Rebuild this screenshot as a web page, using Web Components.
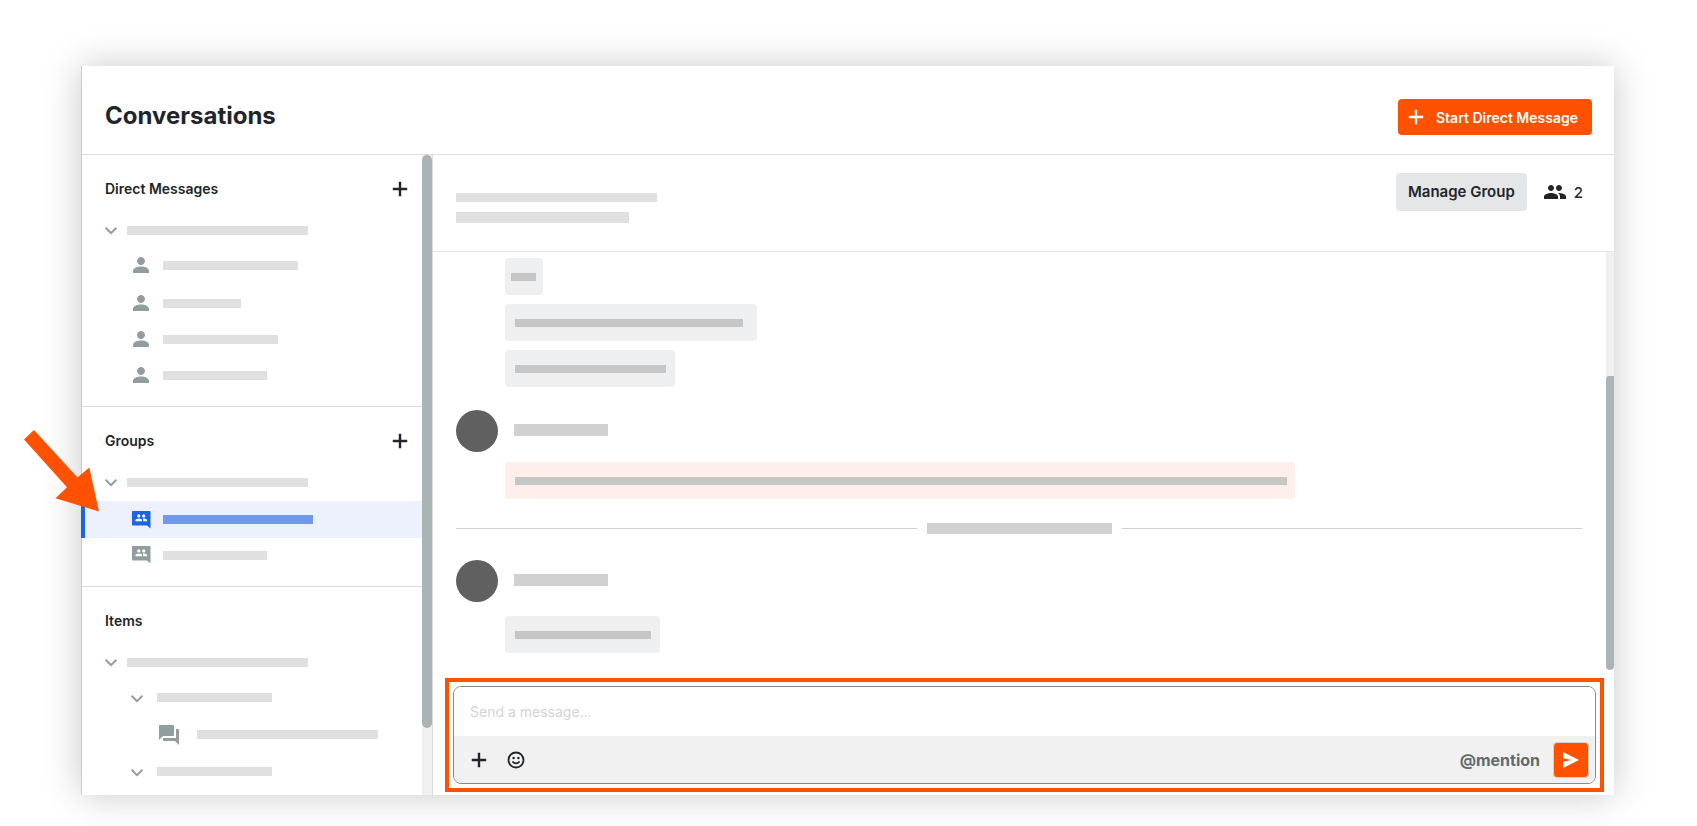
<!DOCTYPE html>
<html lang="en">
<head>
<meta charset="utf-8">
<title>Conversations</title>
<style>
  * { box-sizing: border-box; }
  body {
    margin: 0;
    padding: 66px 83px 31px 81px;
    background: #fff;
    color: #212529;
    font-family: Inter, "Liberation Sans", sans-serif;
    font-size: 14px;
  }
  .spaced { margin-top: 2px; }
</style>
</head>
<body>

<conversations-app>
  <app-header slot="header" heading="Conversations"></app-header>

  <side-section slot="sidebar" heading="Direct Messages" addable>
    <nav-row kind="folder" icon="chevron" bar="181"></nav-row>
    <nav-row kind="item" icon="person" bar="135"></nav-row>
    <nav-row kind="item" icon="person" bar="78" class="spaced"></nav-row>
    <nav-row kind="item" icon="person" bar="115"></nav-row>
    <nav-row kind="item" icon="person" bar="104"></nav-row>
  </side-section>
  <side-section slot="sidebar" heading="Groups" addable>
    <nav-row kind="folder" icon="chevron" bar="181"></nav-row>
    <nav-row kind="item" icon="groupchat" bar="150" class="spaced" selected></nav-row>
    <nav-row kind="item" icon="groupchat" bar="104" compact></nav-row>
  </side-section>
  <side-section slot="sidebar" heading="Items">
    <nav-row kind="folder" icon="chevron" bar="181"></nav-row>
    <nav-row kind="subfolder" icon="chevron" bar="115"></nav-row>
    <nav-row kind="subitem" icon="forum" bar="181"></nav-row>
    <nav-row kind="subfolder" icon="chevron" bar="115"></nav-row>
  </side-section>

  <group-header members="2"></group-header>
  <message-list>
    <message-bubble width="38" bar="25"></message-bubble>
    <message-bubble width="252" bar="228"></message-bubble>
    <message-bubble width="170" bar="151"></message-bubble>
    <message-author bar="94"></message-author>
    <message-bubble width="790" bar="772" mention></message-bubble>
    <date-divider></date-divider>
    <message-author bar="94"></message-author>
    <message-bubble width="155" bar="136" class="last"></message-bubble>
  </message-list>
  <message-composer></message-composer>
</conversations-app>

<script>
(function() {

  const ICONS = {
    add: '<path d="M19.2 13.2h-6v6h-2.4v-6h-6v-2.4h6v-6h2.4v6h6z"/>',
    chevron: '<path d="M16.700 9 12 13.700 7.300 9 5.900 10.400l6.100 6.100 6.100-6.100z"/>',
    person: '<path d="M12 12c2.2 0 4-1.8 4-4s-1.8-4-4-4-4 1.800-4 4 1.800 4 4 4zm0 1.500c-3.500 0-8 1.300-8 4.500v2h16v-2c0-3.200-4.500-4.500-8-4.500z"/>',
    groupchat: '<path d="M4 3h16.500c.6 0 1 .4 1 1v16.500l-3.500-3H4c-.6 0-1-.4-1-1V4c0-.6.4-1 1-1z"/>' +
      '<g fill="#fff"><circle cx="9.800" cy="7.900" r="1.600"/><circle cx="14.700" cy="7.900" r="1.600"/>' +
      '<path d="M6.400 13.300v-.9c0-1.200 2-1.900 3.500-1.900s3.200.7 3.200 1.900v.9zM14.300 13.300v-1c0-.7-.4-1.300-.9-1.700 1.500-.3 4.700.2 4.700 1.700v1z"/></g>',
    forum: '<path d="M21 6h-2v9H6v2c0 .55.45 1 1 1h11l4 4V7c0-.55-.45-1-1-1zm-4 6V3c0-.55-.45-1-1-1H3c-.55 0-1 .45-1 1v14l4-4h10c.55 0 1-.45 1-1z"/>',
    people: '<path d="M16 11c1.660 0 2.990-1.340 2.990-3S17.660 5 16 5s-3 1.340-3 3 1.340 3 3 3zm-8 0c1.660 0 2.990-1.340 2.990-3S9.660 5 8 5 5 6.340 5 8s1.340 3 3 3zm0 2c-2.330 0-7 1.170-7 3.500V19h14v-2.500C15 14.170 10.330 13 8 13zm8 0c-.29 0-.62.020-.97.050C16.190 13.890 17 15.020 17 16.500V19h6v-2.500c0-2.330-4.670-3.500-7-3.500z"/>',
    emoji: '<g fill="none" stroke="currentColor" stroke-width="1.800" stroke-linecap="round"><circle cx="12" cy="12" r="7.500"/><path d="M9 14c1.300 1.900 4.700 1.900 6 0"/></g>' +
      '<circle cx="9.600" cy="10" r="1.200"/><circle cx="14.400" cy="10" r="1.200"/>',
    send: '<path d="M4 4l16 8-16 8v-6.200l8.500-1.800L4 10.200z"/>'
  };

  class AppIcon extends HTMLElement {
    constructor() {
      super();
      this.attachShadow({ mode: 'open' });
    }

    connectedCallback() {
      this.shadowRoot.innerHTML = `
        <style>
          :host { display: block; width: 24px; height: 24px; flex: none; }
          svg { display: block; fill: currentColor; }
        </style>
        <svg width="24" height="24" viewBox="0 0 24 24" aria-hidden="true">${ICONS[this.getAttribute('name')]}</svg>
      `;
    }
  }

  // grey block that stands in for a line of text
  class SkeletonBar extends HTMLElement {
    constructor() {
      super();
      this.attachShadow({ mode: 'open' });
    }

    connectedCallback() {
      const width = this.getAttribute('width');
      const height = this.getAttribute('height') || 9;
      this.shadowRoot.innerHTML = `
        <style>
          :host {
            display: block;
            width: ${width}px;
            max-width: 100%;
            height: ${height}px;
            background: var(--bar-color, #e0e0e0);
          }
        </style>
      `;
    }
  }

  class AppHeader extends HTMLElement {
    constructor() {
      super();
      this.attachShadow({ mode: 'open' });
    }

    connectedCallback() {
      this.shadowRoot.innerHTML = `
        <style>
          :host {
            display: flex;
            align-items: center;
            justify-content: space-between;
            box-sizing: border-box;
            height: 89px;
            padding: 14px 22px 0 23px;
            border-bottom: 1px solid #d9dedf;
          }
          h1 { margin: 0 0 2px; font-size: 24px; line-height: 32px; font-weight: 700; }
          button {
            display: flex;
            align-items: center;
            gap: 8px;
            height: 36px;
            padding: 0 14px 0 6px;
            border: 0;
            border-radius: 4px;
            background: #ff5100;
            color: #fff;
            font: 600 14px Inter, "Liberation Sans", sans-serif;
          }
        </style>
        <h1>${this.getAttribute('heading')}</h1>
        <button type="button"><app-icon name="add"></app-icon>Start Direct Message</button>
      `;
    }
  }

  class SideSection extends HTMLElement {
    constructor() {
      super();
      this.attachShadow({ mode: 'open' });
    }

    connectedCallback() {
      const heading = this.getAttribute('heading');
      const add = this.hasAttribute('addable')
        ? `<button type="button" aria-label="Add to ${heading}"><app-icon name="add"></app-icon></button>`
        : '';
      this.shadowRoot.innerHTML = `
        <style>
          :host { display: block; padding: 14px 0; border-bottom: 1px solid #dcdcdc; }
          :host(:first-of-type) { padding-bottom: 13px; }
          :host(:last-of-type) { border-bottom: 0; padding-bottom: 5px; }
          header {
            display: flex;
            align-items: center;
            justify-content: space-between;
            height: 40px;
            margin-bottom: 4px;
            padding: 0 10px 0 23px;
          }
          h2 { margin: 0; font-size: 14px; line-height: 20px; font-weight: 600; }
          button { padding: 0; border: 0; background: none; color: inherit; }
        </style>
        <header><h2>${heading}</h2>${add}</header>
        <nav aria-label="${heading}"><slot></slot></nav>
      `;
    }
  }

  class NavRow extends HTMLElement {
    constructor() {
      super();
      this.attachShadow({ mode: 'open' });
    }

    connectedCallback() {
      const arrow = this.hasAttribute('selected')
        ? `<svg class="arrow" width="76" height="84" viewBox="0 0 76 84" aria-hidden="true">
             <path d="M1 10.500 11 1l43.500 47.500 11.800-10L76 82.500 32.500 69.300 44 58.200z" fill="#ff5100"/>
           </svg>`
        : '';
      this.shadowRoot.innerHTML = `
        <style>
          :host {
            position: relative;
            display: flex;
            align-items: center;
            gap: 10px;
            box-sizing: border-box;
            height: 37px;
            padding-left: 47px;
            color: #929da1;
          }
          :host([icon="person"]) { height: 36px; }
          :host([kind="folder"]) { height: 34px; padding-left: 17px; gap: 4px; }
          :host([kind="subfolder"]) { padding-left: 43px; gap: 8px; }
          :host([kind="subitem"]) { padding-left: 75px; gap: 16px; }
          :host([compact]) { height: 34px; }
          :host([selected]) {
            margin-left: -1px;
            padding-left: 44px;
            border-left: 4px solid #1b64e4;
            background: #edf1fd;
            color: #1b64e4;
            --bar-color: #6f9aea;
          }
          /* callout that points at the selected group, over the window edge */
          .arrow { position: absolute; right: 100%; top: -72px; margin-right: -14px; z-index: 1; }
        </style>
        <app-icon name="${this.getAttribute('icon')}"></app-icon>
        <skeleton-bar width="${this.getAttribute('bar')}"></skeleton-bar>
        ${arrow}
      `;
    }
  }

  class GroupHeader extends HTMLElement {
    constructor() {
      super();
      this.attachShadow({ mode: 'open' });
    }

    connectedCallback() {
      this.shadowRoot.innerHTML = `
        <style>
          :host {
            display: flex;
            align-items: flex-start;
            justify-content: space-between;
            box-sizing: border-box;
            height: 97px;
            padding: 18px 31px 0 23px;
            border-bottom: 1px solid #e4e6e6;
          }
          .title { display: grid; gap: 10px; padding-top: 20px; }
          .actions { display: flex; align-items: center; gap: 16px; }
          button {
            height: 38px;
            padding: 0 12px 2px;
            border: 0;
            border-radius: 4px;
            background: #e4e6e8;
            color: inherit;
            font: 600 15px Inter, "Liberation Sans", sans-serif;
          }
          .members { display: flex; align-items: center; gap: 7px; font-size: 15px; font-weight: 500; }
        </style>
        <div class="title">
          <skeleton-bar width="201"></skeleton-bar>
          <skeleton-bar width="173" height="11"></skeleton-bar>
        </div>
        <div class="actions">
          <button type="button">Manage Group</button>
          <div class="members"><app-icon name="people"></app-icon><span>${this.getAttribute('members')}</span></div>
        </div>
      `;
    }
  }

  const template_list = document.createElement('template');
  template_list.innerHTML = `
    <style>
      :host { display: flex; flex: 1; margin-bottom: 8px; }
      .messages { flex: 1; min-width: 0; padding: 6px 24px 17px 23px; }
      .track {
        display: flex;
        align-items: flex-end;
        width: 8px;
        background: linear-gradient(#f0f0f0 50%, #fff 50%);
      }
      .thumb { width: 8px; height: calc(100% - 124px); border-radius: 3px 0 4px 4px; background: #aab4b6; }
    </style>
    <div class="messages"><slot></slot></div>
    <div class="track"><div class="thumb"></div></div>
  `;

  class MessageList extends HTMLElement {
    constructor() {
      super();
      this.attachShadow({ mode: 'open' });
      this.shadowRoot.appendChild(template_list.content.cloneNode(true));
    }
  }

  class MessageBubble extends HTMLElement {
    constructor() {
      super();
      this.attachShadow({ mode: 'open' });
    }

    connectedCallback() {
      this.shadowRoot.innerHTML = `
        <style>
          :host {
            display: flex;
            align-items: center;
            box-sizing: border-box;
            width: ${this.getAttribute('width')}px;
            max-width: calc(100% - 49px);
            height: 37px;
            margin: 0 0 9px 49px;
            padding: 0 6px 0 10px;
            border-radius: 4px;
            background: #eeeff1;
            --bar-color: #c6c6c6;
          }
          :host([width="38"]) { padding-left: 6px; }
          :host([mention]) { background: #feefea; }
          :host([mention]), :host(.last) { margin-bottom: 0; }
          :host(.last) { margin-top: 14px; }
        </style>
        <skeleton-bar width="${this.getAttribute('bar')}" height="8"></skeleton-bar>
      `;
    }
  }

  class MessageAuthor extends HTMLElement {
    constructor() {
      super();
      this.attachShadow({ mode: 'open' });
    }

    connectedCallback() {
      this.shadowRoot.innerHTML = `
        <style>
          :host {
            display: flex;
            align-items: center;
            gap: 16px;
            margin: 23px 0 10px;
            --bar-color: #d1d1d1;
          }
          .avatar { width: 42px; height: 42px; border-radius: 50%; background: #606060; }
          skeleton-bar { margin-bottom: 2px; }
        </style>
        <div class="avatar"></div>
        <skeleton-bar width="${this.getAttribute('bar')}" height="12"></skeleton-bar>
      `;
    }
  }

  const template_divider = document.createElement('template');
  template_divider.innerHTML = `
    <style>
      :host {
        display: flex;
        align-items: center;
        gap: 10px;
        margin: 24px 0 26px;
        --bar-color: #d1d1d1;
      }
      .line { flex: 1; height: 1px; background: #d1d1d1; }
    </style>
    <div class="line"></div>
    <skeleton-bar width="185" height="11"></skeleton-bar>
    <div class="line"></div>
  `;

  class DateDivider extends HTMLElement {
    constructor() {
      super();
      this.attachShadow({ mode: 'open' });
      this.shadowRoot.appendChild(template_divider.content.cloneNode(true));
    }
  }

  const template_composer = document.createElement('template');
  template_composer.innerHTML = `
    <style>
      :host {
        display: block;
        margin: 0 10px 3px 12px;
        padding: 4px;
        border: 4px solid #ff5100;
      }
      form {
        margin: 0;
        overflow: hidden;
        border: 1px solid #888;
        border-radius: 8px;
      }
      input {
        display: block;
        box-sizing: border-box;
        width: 100%;
        height: 49px;
        padding: 0 16px;
        border: 0;
        outline: 0;
        font: 14px Inter, "Liberation Sans", sans-serif;
      }
      input::placeholder { color: #d2d4d5; }
      .toolbar {
        display: flex;
        align-items: center;
        gap: 13px;
        height: 47px;
        padding: 0 6px 0 13px;
        background: #f1f1f1;
      }
      button {
        padding: 0;
        border: 0;
        background: none;
        color: #212529;
        font: 700 16px Inter, "Liberation Sans", sans-serif;
      }
      .mention { margin-left: auto; color: #5f6b6d; }
      .send {
        display: grid;
        place-items: center;
        width: 36px;
        height: 36px;
        border: 1px solid #d5d2d0;
        border-radius: 4px;
        background: #ff5100;
        color: #fff;
      }
    </style>
    <form>
      <input type="text" aria-label="Message" placeholder="Send a message...">
      <div class="toolbar">
        <button type="button" aria-label="Attach"><app-icon name="add"></app-icon></button>
        <button type="button" aria-label="Emoji"><app-icon name="emoji"></app-icon></button>
        <button type="button" class="mention">@mention</button>
        <button type="button" class="send" aria-label="Send"><app-icon name="send"></app-icon></button>
      </div>
    </form>
  `;

  class MessageComposer extends HTMLElement {
    constructor() {
      super();
      this.attachShadow({ mode: 'open' });
      this.shadowRoot.appendChild(template_composer.content.cloneNode(true));
    }
  }

  const template_app = document.createElement('template');
  template_app.innerHTML = `
    <style>
      :host {
        display: block;
        border-left: 1px solid #c8cacb;
        background: #fff;
        box-shadow: 0 0 36px rgba(0, 0, 0, 0.22);
      }
      .columns { display: grid; grid-template-columns: 351px 1fr; }
      aside { display: flex; border-right: 1px solid #d9dcdd; }
      .sections { flex: 1; }
      .track { width: 10px; background: #f0f0f0; }
      .thumb { height: calc(100% - 67px); border-radius: 5px; background: #aab4b6; }
      main { display: flex; flex-direction: column; min-width: 0; }
    </style>
    <slot name="header"></slot>
    <div class="columns">
      <aside>
        <div class="sections"><slot name="sidebar"></slot></div>
        <div class="track"><div class="thumb"></div></div>
      </aside>
      <main><slot></slot></main>
    </div>
  `;

  class ConversationsApp extends HTMLElement {
    constructor() {
      super();
      this.attachShadow({ mode: 'open' });
      this.shadowRoot.appendChild(template_app.content.cloneNode(true));
    }
  }

  window.customElements.define('app-icon', AppIcon);
  window.customElements.define('skeleton-bar', SkeletonBar);
  window.customElements.define('app-header', AppHeader);
  window.customElements.define('side-section', SideSection);
  window.customElements.define('nav-row', NavRow);
  window.customElements.define('group-header', GroupHeader);
  window.customElements.define('message-list', MessageList);
  window.customElements.define('message-bubble', MessageBubble);
  window.customElements.define('message-author', MessageAuthor);
  window.customElements.define('date-divider', DateDivider);
  window.customElements.define('message-composer', MessageComposer);
  window.customElements.define('conversations-app', ConversationsApp);
})();
</script>
</body>
</html>
